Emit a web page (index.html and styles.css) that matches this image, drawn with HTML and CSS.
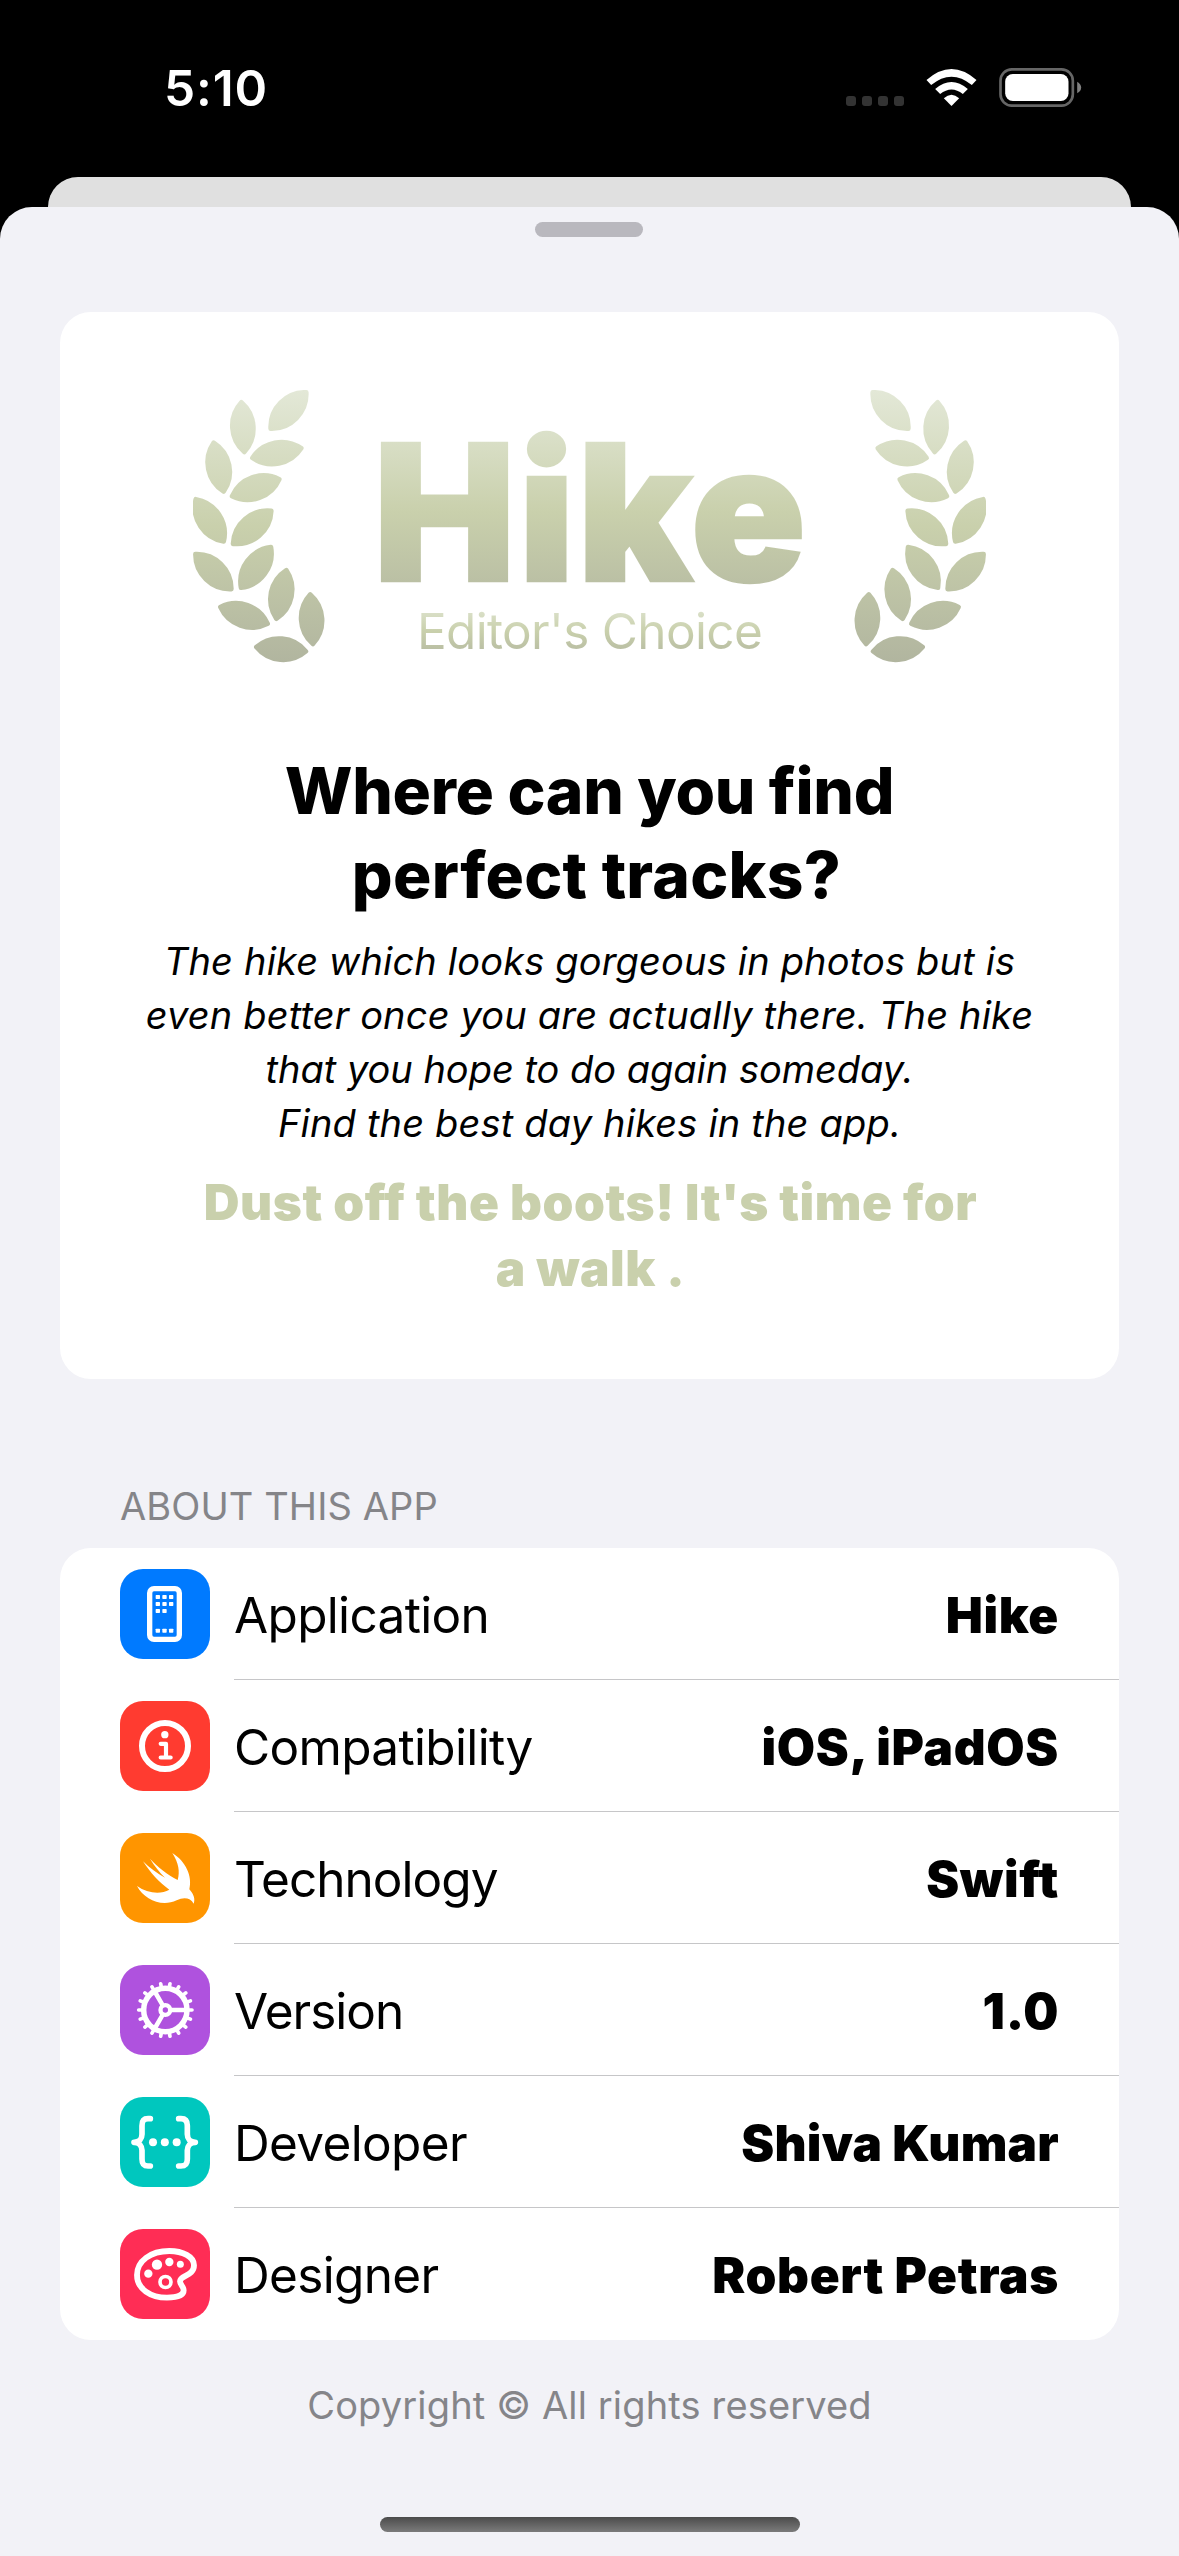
FILE: index.html
```html
<!DOCTYPE html>
<html lang="en">
<head>
<meta charset="utf-8">
<title>Hike</title>
<link rel="stylesheet" href="styles.css">
</head>
<body>
<header class="status">
  <span class="time">5:10</span>
  <div class="indicators">
    <div class="cell"><i></i><i></i><i></i><i></i></div>
    <svg class="wifi" viewBox="259 57 152 111" fill="#fff">
      <path d="M260 90Q335 24 410 90L396 105Q335 55 274 105Z"/>
      <path d="M286 117Q335 75 384 117L369 132Q335 105 301 132Z"/>
      <path d="M312 145Q335 124 358 145L335 168Z"/>
    </svg>
    <svg class="battery" viewBox="477 54 248 117">
      <rect x="481" y="58" width="217" height="109" rx="34" fill="none" stroke="#666" stroke-width="8"/>
      <rect x="495" y="72" width="190" height="81" rx="23" fill="#fff"/>
      <path d="M711 95Q723 102 723 112.500T711 130Z" fill="#808080"/>
    </svg>
  </div>
</header>

<div class="backdrop"></div>

<main class="sheet">
  <div class="grabber"></div>

  <section class="card intro">
    <svg class="defs" width="0" height="0">
      <defs>
        <linearGradient id="sage" gradientUnits="userSpaceOnUse" x1="0" y1="60" x2="0" y2="880">
          <stop offset="0" stop-color="#e3e8d7"/>
          <stop offset=".5" stop-color="#c9d0ac"/>
          <stop offset="1" stop-color="#b1b59f"/>
        </linearGradient>
        <g id="leaves" fill="url(#sage)" stroke="url(#sage)" stroke-width="14" stroke-linejoin="round">
          <path d="M379 67A104 104 0 0 1 272 176A104 104 0 0 1 379 67Z"/>
          <path d="M184 97A104 104 0 0 1 193 246A104 104 0 0 1 184 97Z"/>
          <path d="M101 218A104 104 0 0 1 131 365A104 104 0 0 1 101 218Z"/>
          <path d="M364 235A104 104 0 0 1 217 264A104 104 0 0 1 364 235Z"/>
          <path d="M298 328A104 104 0 0 1 156 379A104 104 0 0 1 298 328Z"/>
          <path d="M47 388A104 104 0 0 1 131 515A104 104 0 0 1 47 388Z"/>
          <path d="M274 423A104 104 0 0 1 159 522A104 104 0 0 1 274 423Z"/>
          <path d="M46 553A104 104 0 0 1 154 658A104 104 0 0 1 46 553Z"/>
          <path d="M273 532A104 104 0 0 1 183 654A104 104 0 0 1 273 532Z"/>
          <path d="M319 601A104 104 0 0 1 289 747A104 104 0 0 1 319 601Z"/>
          <path d="M121 712A104 104 0 0 1 263 762A104 104 0 0 1 121 712Z"/>
          <path d="M391 674A104 104 0 0 1 399 823A104 104 0 0 1 391 674Z"/>
          <path d="M229 832A104 104 0 0 1 378 845A104 104 0 0 1 229 832Z"/>
        </g>
      </defs>
    </svg>
    <div class="hero">
      <svg class="laurel" viewBox="39 60 396 820"><use href="#leaves"/></svg>
      <div class="brand">
        <h1 class="name">Hike</h1>
        <p class="award">Editor's Choice</p>
      </div>
      <svg class="laurel trailing" viewBox="39 60 396 820"><use href="#leaves"/></svg>
    </div>
    <h2 class="question"><span class="snug">Where can you find</span><br><span class="indent">perfect tracks?</span></h2>
    <p class="about">The hike which looks gorgeous in photos but is<br>even better once you are actually there. The hike<br><span class="snug">that you hope to do again someday.</span><br>Find the best day hikes in the app.</p>
    <p class="callout">Dust off the boots! It's time for<br>a walk .</p>
  </section>

  <h3 class="section-title">ABOUT THIS APP</h3>
  <section class="card list">
    <div class="row">
      <svg class="icon blue" viewBox="0 0 270 270">
        <rect x="89" y="59" width="89" height="152" rx="13" class="line" stroke-width="16"/>
        <g fill="#fff">
          <rect x="107" y="78" width="13" height="12" rx="2"/><rect x="127" y="78" width="13" height="12" rx="2"/><rect x="147" y="78" width="13" height="12" rx="2"/>
          <rect x="107" y="99" width="13" height="12" rx="2"/><rect x="127" y="99" width="13" height="12" rx="2"/><rect x="147" y="99" width="13" height="12" rx="2"/>
          <rect x="107" y="120" width="13" height="12" rx="2"/><rect x="127" y="120" width="13" height="12" rx="2"/>
          <rect x="107" y="179" width="13" height="12" rx="2"/><rect x="127" y="179" width="13" height="12" rx="2"/><rect x="147" y="179" width="13" height="12" rx="2"/>
        </g>
      </svg>
      <span class="label">Application</span><span class="value">Hike</span>
    </div>
    <div class="row">
      <svg class="icon red" viewBox="0 0 270 270">
        <circle cx="135" cy="135" r="69" class="line" stroke-width="18"/>
        <circle cx="134.500" cy="101" r="11" fill="#fff"/>
        <path d="M122 128.500H138V169M122 169.500H152" class="line" stroke-width="12.500"/>
      </svg>
      <span class="label">Compatibility</span><span class="value">iOS, iPadOS</span>
    </div>
    <div class="row">
      <svg class="icon orange" viewBox="0 0 270 270">
        <path d="M157 60C197 85 218 130 208 169C222 184 226 200 221 212C212 195 192 191 170 202C125 224 73 200 51 159C82 181 122 185 148 170C118 149 90 118 69 85C88 104 112 122 135 134C118 117 103 98 90 77C112 101 143 126 173 141C180 115 176 90 157 60Z" fill="#fff"/>
      </svg>
      <span class="label far">Technology</span><span class="value">Swift</span>
    </div>
    <div class="row">
      <svg class="icon purple" viewBox="0 0 270 270">
        <g transform="translate(136 135)" class="line">
          <circle r="65" stroke-width="16.500"/>
          <circle r="14.500" stroke-width="13"/>
          <path d="M18 0H62M-9-16L-31-54M-9 16L-31 54" stroke-width="13.500"/>
          <path stroke-width="11" d="M68 0H80M-68 0H-80M63.900 23.300L75.200 27.400M52.100 43.700L61.300 51.400M34 58.900L40 69.300M11.800 67L13.900 78.800M-11.800 67L-13.900 78.800M-34 58.900L-40 69.300M-52.100 43.700L-61.300 51.400M-63.900 23.300L-75.200 27.400M63.900-23.300L75.200-27.400M52.100-43.700L61.300-51.400M34-58.900L40-69.300M11.800-67L13.900-78.800M-11.800-67L-13.900-78.800M-34-58.900L-40-69.300M-52.100-43.700L-61.300-51.400M-63.900-23.300L-75.200-27.400"/>
        </g>
      </svg>
      <span class="label far">Version</span><span class="value">1.0</span>
    </div>
    <div class="row">
      <svg class="icon mint" viewBox="0 0 270 270">
        <path class="line" stroke-width="17" d="M91 65H84C70 65 66 73 66 86V112C66 124 58 136 42 136C58 136 66 148 66 160V186C66 200 70 207 84 207H91M176 65H183C197 65 202 73 202 86V112C202 124 210 136 226 136C210 136 202 148 202 160V186C202 200 197 207 183 207H176"/>
        <g fill="#fff"><circle cx="99" cy="136" r="12"/><circle cx="134.500" cy="136" r="12"/><circle cx="170" cy="136" r="12"/></g>
      </svg>
      <span class="label">Developer</span><span class="value near">Shiva Kumar</span>
    </div>
    <div class="row">
      <svg class="icon pink" viewBox="0 0 270 270">
        <path class="line" stroke-width="17.500" d="M148 66C92 66 51 96 51 138C51 180 92 206 141 206C173 206 191 198 191 184C191 172 180 168 180 157C180 138 222 142 222 109C222 83 188 66 148 66Z"/>
        <g fill="#fff"><circle cx="85" cy="134" r="12.500"/><circle cx="111" cy="107" r="15.500"/><circle cx="148" cy="99" r="12.500"/><circle cx="181" cy="106" r="10.500"/></g>
        <circle class="line" cx="136.500" cy="159" r="16.500" stroke-width="11"/>
      </svg>
      <span class="label">Designer</span><span class="value">Robert Petras</span>
    </div>
  </section>

  <footer class="copyright">Copyright © All rights reserved</footer>
  <div class="home"></div>
</main>
</body>
</html>
```
FILE: styles.css
```css
* { box-sizing: border-box; margin: 0; padding: 0; }

body {
  width: 1179px;
  height: 2556px;
  overflow: hidden;
  background: #000;
  color: #000;
  font-family: Inter, "Liberation Sans", sans-serif;
  font-size: 49.5px;
  white-space: nowrap;
}

svg { display: block; }

.status {
  display: flex;
  justify-content: space-between;
  align-items: flex-start;
  height: 177px;
  padding: 58px 97px 0 164px;
  color: #fff;
}
.time { font-weight: 600; line-height: 60px; letter-spacing: .9px; }
.indicators { display: flex; padding-top: 10px; }
.cell { display: flex; gap: 6px; padding-top: 28px; margin-right: 22px; }
.cell i { width: 10px; height: 10px; border-radius: 3px; background: #333; }
.wifi { width: 51px; height: 37px; margin: 1px 22px 0 0; }
.battery { width: 83px; height: 39px; }

.backdrop {
  height: 30px;
  margin: 0 48px;
  border-radius: 30px 30px 0 0;
  background: #e0e0e0;
}

.sheet {
  display: flex;
  flex-direction: column;
  height: 2349px;
  padding: 15px 60px 24px;
  border-radius: 32px 32px 0 0;
  background: #f2f2f7;
}
.grabber {
  align-self: center;
  width: 108px;
  height: 15px;
  margin-right: 1px;
  border-radius: 8px;
  background: #b9b8be;
}

.card { border-radius: 31px; background: #fff; }

.intro {
  height: 1067px;
  margin-top: 75px;
  padding-top: 78px;
  text-align: center;
}
.defs { position: absolute; }
.hero {
  display: flex;
  justify-content: space-between;
  margin: 0 133px;
}
.laurel { width: 132px; height: 273px; }
.trailing { transform: scaleX(-1); }
.brand {
  display: flex;
  flex-direction: column;
  align-items: center;
  padding-top: 4px;
}
.name, .award {
  background: linear-gradient(#e3e8d7, #c9d0ac, #b1b59f);
  -webkit-background-clip: text;
  background-clip: text;
  color: transparent;
}
.name {
  padding-left: 3px;
  font-size: 190px;
  font-weight: 900;
  line-height: 236px;
  letter-spacing: 2.6px;
  -webkit-text-stroke: 2.5px transparent;
}
.award { margin-top: -29px; line-height: 60px; letter-spacing: -.67px; }

.question {
  margin-top: 86px;
  font-size: 64px;
  font-weight: 800;
  line-height: 84px;
  letter-spacing: .29px;
}
.question .snug { letter-spacing: -.29px; }
.indent { padding-left: 14px; }
.about {
  margin-top: 17px;
  font-size: 38px;
  font-style: italic;
  line-height: 54px;
  letter-spacing: .17px;
}
.about .snug { letter-spacing: -.02px; }
.callout {
  margin-top: 19px;
  padding-left: 2px;
  color: #c9d0ac;
  font-weight: 900;
  line-height: 66px;
  letter-spacing: .55px;
}

.section-title {
  margin: 103px 0 18px 60px;
  color: #858589;
  font-size: 38px;
  font-weight: 400;
  line-height: 48px;
  letter-spacing: .1px;
}

.list { display: flex; flex-direction: column; }
.row {
  display: flex;
  align-items: center;
  height: 132px;
  padding: 0 60px;
}
.row:not(:last-child) {
  background: linear-gradient(#c6c6c8, #c6c6c8) 174px 100% / 100% 1px no-repeat;
}
.icon { width: 90px; height: 90px; margin-right: 24px; border-radius: 23px; }
.line { fill: none; stroke: #fff; stroke-linecap: round; stroke-linejoin: round; }
.blue { background: #007aff; }
.red { background: #ff3b30; }
.orange { background: #ff9500; }
.purple { background: #af52de; }
.mint { background: #00c7be; }
.pink { background: #ff2d55; }
.label, .value { padding-top: 2px; line-height: 60px; }
.label { flex: 1; letter-spacing: -.66px; }
.far { letter-spacing: -.98px; }
.value { font-weight: 900; letter-spacing: .65px; }
.near { letter-spacing: .2px; }

.copyright {
  margin-top: 38px;
  color: #858589;
  font-size: 38px;
  line-height: 54px;
  letter-spacing: .15px;
  text-align: center;
}
.home {
  align-self: center;
  width: 420px;
  height: 15px;
  margin-top: auto;
  border-radius: 8px;
  background: linear-gradient(#4b4b4b, #7b7b7b);
}
```
